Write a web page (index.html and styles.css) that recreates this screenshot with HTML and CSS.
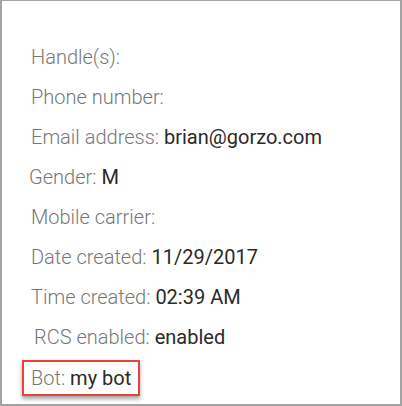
FILE: index.html
```html
<!DOCTYPE html>
<html lang="en">

<head>
    <meta charset="UTF-8">
    <meta name="viewport" content="width=device-width, initial-scale=1.0">
    <title>Contact details</title>
    <link rel="stylesheet" href="styles.css">
</head>

<body>
    <!-- Painel de detalhes do contato -->
    <div class="painel">
        <ul class="detalhes">
            <li class="linha"><span class="rotulo">Handle(s):</span></li>
            <li class="linha"><span class="rotulo">Phone number:</span></li>
            <li class="linha"><span class="rotulo">Email address:</span> <span class="valor">brian@gorzo.com</span></li>
            <li class="linha recuo-menor"><span class="rotulo">Gender:</span> <span class="valor">M</span></li>
            <li class="linha"><span class="rotulo">Mobile carrier:</span></li>
            <li class="linha"><span class="rotulo">Date created:</span> <span class="valor">11/29/2017</span></li>
            <li class="linha"><span class="rotulo">Time created:</span> <span class="valor">02:39 AM</span></li>
            <li class="linha recuo-maior"><span class="rotulo">RCS enabled:</span> <span class="valor">enabled</span></li>
            <li class="linha destaque"><span class="rotulo">Bot:</span> <span class="valor">my bot</span></li>
        </ul>
    </div>
</body>

</html>
```

FILE: styles.css
```css
* {
    margin: 0;
    padding: 0;
    box-sizing: border-box;
}

body {
    background-color: #ffffff;
    font-family: Roboto, "Noto Sans", sans-serif;
}

/* Painel com borda cinza */
.painel {
    width: 402px;
    height: 406px;
    border: 2px solid #a3a3a3;
    border-top-width: 1px;
    padding: 36px 0 0 29px;
}

.detalhes {
    list-style: none;
}

.linha {
    font-size: 20px;
    line-height: 40px;
    height: 40px;
    white-space: nowrap;
}

.recuo-menor {
    margin-left: -2px;
}

.recuo-maior {
    margin-left: 3px;
}

.rotulo {
    font-weight: 300;
    color: #777777;
}

.valor {
    font-weight: 400;
    color: #2a2a2a;
}

/* Caixa vermelha em volta do Bot */
.destaque {
    display: inline-block;
    margin-left: -9px;
    margin-top: 3px;
    height: 36px;
    line-height: 32px;
    padding: 0 7px;
    border: 2px solid #e8423f;
    box-shadow: 0 3px 4px rgba(0, 0, 0, 0.35);
}
```
